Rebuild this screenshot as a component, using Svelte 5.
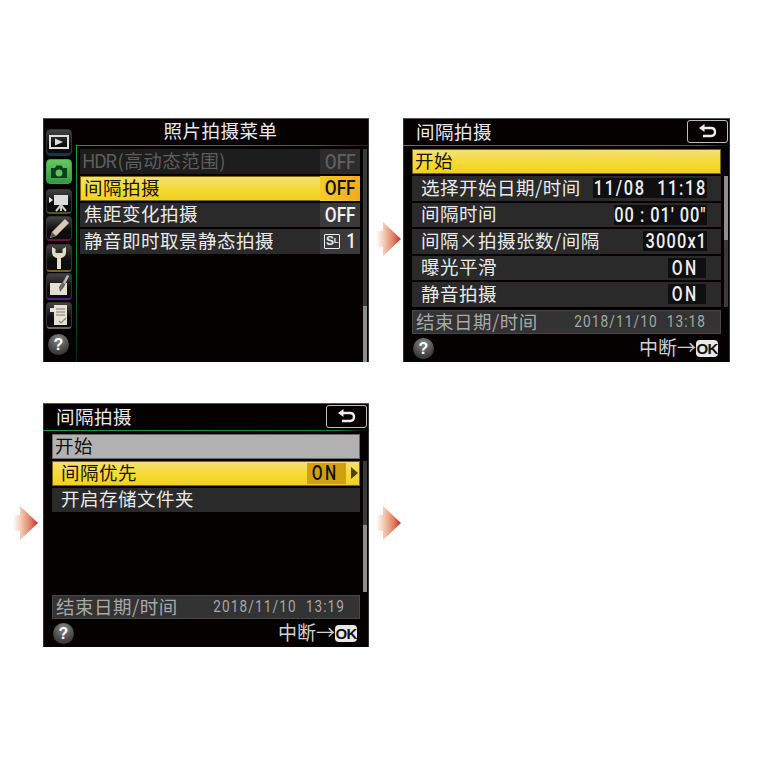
<script>
  const menuRows = [
    { prefix: 'HDR', label: '(高动态范围)', kind: 'off', value: 'OFF', state: 'disabled' },
    { label: '间隔拍摄', kind: 'off', value: 'OFF', state: 'active' },
    { label: '焦距变化拍摄', kind: 'off', value: 'OFF', state: '' },
    { label: '静音即时取景静态拍摄', kind: 'sl', value: '1', state: '' }
  ];
  const shootRows = [
    { label: '选择开始日期/时间', value: '11/08  11:18', cls: 'd1' },
    { label: '间隔时间', value: '00 : 01′ 00″', cls: 'd2' },
    { label: '间隔×拍摄张数/间隔', value: '3000x1', cls: 'd3' },
    { label: '曝光平滑', value: 'ON', cls: 'on' },
    { label: '静音拍摄', value: 'ON', cls: 'on' }
  ];
</script>

{#snippet arrow(cls)}
  <svg class="arrow {cls}" viewBox="0 0 26 34" width="26" height="34" aria-hidden="true">
    <defs>
      <linearGradient id="ag-{cls}" x1="0" x2="1" y1="0" y2="0">
        <stop offset="0" stop-color="#fff" />
        <stop offset=".3" stop-color="#f3cdb8" />
        <stop offset=".7" stop-color="#e07f62" />
        <stop offset="1" stop-color="#c9262a" />
      </linearGradient>
    </defs>
    <path d="M0 9 H7 V0 L25 17 L7 34 V25 H0Z" fill="url(#ag-{cls})" />
  </svg>
{/snippet}

{#snippet help()}
  <span class="help">?</span>
{/snippet}

{#snippet back()}
  <span class="back">
    <svg viewBox="0 0 22 16" width="22" height="16" aria-hidden="true">
      <path d="M5 4 H14 Q18 4 18 8 Q18 12 14 12 H6" fill="none" stroke="#eee" stroke-width="2.4" />
      <path d="M7.5 0 V8 L2 4Z" fill="#eee" />
    </svg>
  </span>
{/snippet}

{#snippet footer(date)}
  <div class="end"><span class="end-label">结束日期/时间</span><span class="end-date">{date}</span></div>
  <div class="foot">
    {@render help()}
    <span class="cancel"><span class="cancel-text">中断→</span><b class="ok">OK</b></span>
  </div>
{/snippet}

<div class="page">
  <section class="screen menu">
    <nav class="rail">
      <span class="tile t-play">
        <svg viewBox="0 0 26 27" width="26" height="27"><rect x="4" y="7" width="18" height="12" fill="none" stroke="#ddd" stroke-width="2"/><path d="M9 9.5 L17 13 L9 16.5Z" fill="#ddd"/></svg>
      </span>
      <span class="tile t-cam">
        <svg viewBox="0 0 26 25" width="26" height="25"><path d="M5 9 H9 L10.5 6.5 H15.5 L17 9 H21 V19 H5Z" fill="#0d3f1e"/><circle cx="13" cy="14" r="3.4" fill="#5fc25e"/></svg>
      </span>
      <span class="tile t-movie">
        <svg viewBox="0 0 26 25" width="26" height="25"><path d="M3 8 L7 11 L3 14Z" fill="#eee"/><rect x="8" y="6" width="14" height="10" fill="#ddd"/><path d="M15 16 L10 22 M15 16 V22 M15 16 L20 22" stroke="#ccc" stroke-width="2"/></svg>
      </span>
      <span class="tile t-pen">
        <svg viewBox="0 0 26 25" width="26" height="25"><path d="M19 3 L23 7 L10 20 L4 22 L6 16Z" fill="#d9c9b6"/><path d="M4 22 L6 16 L10 20Z" fill="#555"/></svg>
      </span>
      <span class="tile t-wrench">
        <svg viewBox="0 0 26 27" width="26" height="27"><path d="M6 3 V8 Q6 13 11 14 V25 H15 V14 Q20 13 20 8 V3 L16.5 5 V9 H9.5 V5Z" fill="#e5dcc4"/></svg>
      </span>
      <span class="tile t-retouch">
        <svg viewBox="0 0 26 27" width="26" height="27"><rect x="4" y="10" width="17" height="12" fill="#e4dfcf"/><path d="M21 2 L23 3 L18 14 L14 19 L13 14Z" fill="#666"/><path d="M21 2 L23 3 L19 11 L17 10Z" fill="#bbb"/></svg>
      </span>
      <span class="tile t-my">
        <svg viewBox="0 0 26 27" width="26" height="27"><path d="M8 3 H21 V23 H8Z M4 6 H8 V10 H4Z" fill="#e5e1d2"/><path d="M10 7 H19 M10 10 H19 M10 13 H19" stroke="#777" stroke-width="1"/><path d="M13 19 L15 21 L20 16" stroke="#888" stroke-width="1.2" fill="none"/></svg>
      </span>
      <span class="rail-help">{@render help()}</span>
    </nav>
    <div class="main">
      <h2 class="menu-title">照片拍摄菜单</h2>
      <div class="menu-body">
        <div class="rows">
          {#each menuRows as r}
            <div class="row {r.state}">
              <span class="label">{#if r.prefix}<span class="hdr">{r.prefix}</span>{/if}{r.label}</span>
              <span class="val">
                {#if r.kind === 'sl'}<span class="sl">S<small>L</small></span>{/if}<span class="valtext">{r.value}</span>
              </span>
            </div>
          {/each}
        </div>
        <div class="bar"><i class="thumb-low"></i></div>
      </div>
    </div>
    {@render arrow('a1')}
  </section>

  <section class="screen sub">
    <header class="head"><h2>间隔拍摄</h2>{@render back()}</header>
    <div class="start yellow"><span>开始</span></div>
    <div class="sub-body">
      <div class="rows">
        {#each shootRows as r}
          <div class="row"><span class="label">{r.label}</span><span class="box {r.cls}"><span class="boxtext">{r.value}</span></span></div>
        {/each}
      </div>
      <div class="bar short"><i class="thumb-high"></i></div>
    </div>
    {@render footer('2018/11/10  13:18')}
  </section>

  <section class="screen sub">
    <header class="head"><h2>间隔拍摄</h2>{@render back()}</header>
    <div class="start grey"><span>开始</span></div>
    <div class="sub-body">
      <div class="rows">
        <div class="row active slim">
          <span class="label">间隔优先</span>
          <span class="box on dim"><span class="boxtext">ON</span></span>
          <i class="tri"></i>
        </div>
        <div class="row"><span class="label">开启存储文件夹</span></div>
      </div>
      <div class="bar short"><i class="thumb-mid"></i></div>
    </div>
    {@render footer('2018/11/10  13:19')}
    {@render arrow('a2')}
    {@render arrow('a3')}
  </section>
</div>

<style>
  :global(body) { margin: 0; background: #fff; }
  .page {
    width: 760px;
    height: 760px;
    box-sizing: border-box;
    padding: 118px 0 0 43px;
    display: grid;
    grid-template-columns: 326px 327px;
    grid-auto-rows: 244px;
    column-gap: 34px;
    row-gap: 41px;
    font-family: "Noto Sans CJK SC", "Noto Sans", sans-serif;
  }
  .screen {
    position: relative;
    background: #050101;
    color: #e9e9e9;
    box-sizing: border-box;
    box-shadow: inset 0 1px 0 #555, inset 1px 0 0 #333, inset -1px 0 0 #333;
    font-size: 18.5px;
    letter-spacing: .5px;
    line-height: 24px;
  }
  h2 { margin: 0; font-weight: 400; font-size: 18.5px; }

  .arrow { position: absolute; }
  .a1 { left: 333px; top: 104px; }
  .a2 { left: -30px; top: 103px; }
  .a3 { left: 333px; top: 103px; }

  .menu { display: flex; }
  .rail {
    width: 33px;
    box-sizing: border-box;
    padding: 11px 0 0 3px;
    display: flex;
    flex-direction: column;
    gap: 2px;
  }
  .tile {
    display: block;
    box-sizing: border-box;
    width: 26px;
    height: 27px;
    border-radius: 4px;
    background: linear-gradient(#444, #0c0c0c 60%);
    border: 1px solid #333;
    overflow: hidden;
  }
  .tile svg { display: block; margin: -1px; }
  .t-play { box-shadow: inset 0 -2px 0 #0c3a55; }
  .t-cam { height: 25px; background: linear-gradient(#64c860, #2f9c3c); border-color: #3aa548; margin-top: 1px; }
  .t-movie { height: 25px; margin-top: 3px; border-bottom: 2px solid #4e5a1c; }
  .t-pen { height: 25px; border-bottom: 2px solid #6d1046; }
  .t-wrench { height: 28px; margin-top: 1px; border-color: #3a3428 #3a3428 #7c5c24; border-bottom-width: 2px; }
  .t-retouch { margin-top: -1px; border-bottom: 2px solid #58207e; }
  .t-my { border-bottom: 2px solid #666; }
  .rail-help { margin: 3px 0 0 2px; }

  .help {
    display: block;
    width: 21px;
    height: 21px;
    border-radius: 50%;
    background: radial-gradient(circle at 50% 25%, #888, #3e3e3e 70%);
    color: #fff;
    font: 700 16px/21px "Liberation Sans", sans-serif;
    text-align: center;
    letter-spacing: 0;
  }

  .main { flex: 1; display: flex; flex-direction: column; min-width: 0; }
  .menu-title { height: 27px; line-height: 25px; text-align: center; padding-right: 4px; }
  .menu-body {
    flex: 1;
    display: flex;
    background:
      linear-gradient(90deg, #1e9a44, #14803a 80%, #08301a) top left / 100% 1px no-repeat,
      linear-gradient(#1e9a44, #14803a 55%, #08240f) top left / 1px 100% no-repeat;
    padding: 4px 2px 0 4px;
    min-height: 0;
  }

  .rows { flex: 1; display: flex; flex-direction: column; gap: 2px; min-width: 0; }
  .row {
    display: flex;
    align-items: center;
    height: 24.5px;
    background: #2a2a2a;
    padding-left: 9px;
    flex: none;
  }
  .label { flex: 1; white-space: nowrap; margin-top: -3px; }
  .hdr { letter-spacing: -1.5px; margin-right: 2px; }

  .menu-body .row { padding-left: 4px; padding-right: 0; }
  .menu-body .row.disabled { padding-left: 2px; }
  .menu-body .val {
    width: 36px;
    height: 100%;
    display: flex;
    align-items: center;
    justify-content: flex-end;
    padding-right: 4px;
    background: #3a3a3a;
  }
  .valtext {
    font: 500 21px/24px Roboto, sans-serif;
    letter-spacing: 0;
    display: inline-block;
    transform: scaleX(.82);
    transform-origin: right center;
    color: #f2f2f2;
  }
  .sl {
    font: 700 12px/14px "Liberation Sans", sans-serif;
    letter-spacing: -.5px;
    border: 1px solid #eee;
    margin-right: 4px;
    height: 15px;
    width: 16px;
    flex: none;
    box-sizing: border-box;
    display: inline-flex;
    align-items: center;
    justify-content: center;
    border-radius: 1px;
  }
  .sl small { font-size: 8px; }
  .row.disabled { background: #1d1d1d; color: #5d5d5d; height: 25px; }
  .row.disabled .val { background: #2c2c2c; }
  .row.disabled .valtext { color: #5e5e5e; }
  .row.active, .yellow {
    color: #1a1400;
    background: linear-gradient(#f3e07a, #f6d92f 60%, #f2cf20);
    box-shadow: inset 0 0 0 1px #7b6506;
  }
  .row.active .val { background: linear-gradient(90deg, #f5cb2c, #f0ac1e); }
  .row.active .valtext { color: #111; }

  .bar {
    width: 4px;
    flex: none;
    margin-left: 3px;
    background: #3a3a3a;
    position: relative;
    margin-bottom: 0;
  }
  .bar i { position: absolute; left: 0; right: 0; background: #8e8e8e; }
  .thumb-low { bottom: 0; height: 56px; }
  .thumb-high { top: 0; height: 64px; }
  .thumb-mid { top: 64px; height: 67px; }
  .bar.short { margin-right: 2px; }

  .head {
    height: 27px;
    display: flex;
    align-items: center;
    justify-content: space-between;
    padding: 0 2px 0 13px;
    border-bottom: 1px solid #14803a;
    border-image: linear-gradient(90deg, #1e9a44, #14803a 90%, #050101) 1;
  }
  .head h2 { line-height: 25px; }
  .back {
    box-sizing: border-box;
    width: 41px;
    height: 23px;
    border: 1px solid #bdbdbd;
    border-radius: 3px;
    display: flex;
    align-items: center;
    justify-content: center;
  }
  .start {
    margin: 3px 9px 0 9px;
    height: 25px;
    padding-left: 3px;
    display: flex;
    align-items: center;
    box-sizing: border-box;
  }
  .start span { margin-top: -3px; }
  .grey { background: #b1b1b1; color: #111; box-shadow: inset 0 0 0 1px #6c6c6c; }

  .sub-body { display: flex; height: 131px; margin: 2px 0 0 9px; }
  .sub-body .row { padding-right: 15px; }
  .box {
    background: #0f0f0f;
    height: 20px;
    display: flex;
    justify-content: flex-end;
    flex: none;
    color: #eee;
  }
  .boxtext {
    flex: none;
    display: block;
    font: 500 20px/20px Roboto, sans-serif;
    white-space: pre;
    transform: scaleX(.82);
    transform-origin: right center;
  }
  .d1 { width: 114px; margin-right: -1px; }
  .d1 .boxtext { letter-spacing: 2px; }
  .d2 { width: 93px; margin-right: -1px; }
  .d2 .boxtext { letter-spacing: 1.2px; }
  .d3 { width: 64px; margin-right: -1px; }
  .d3 .boxtext { letter-spacing: 1.4px; }
  .on { width: 38px; padding-right: 8px; box-sizing: border-box; }
  .on .boxtext { font-size: 21px; letter-spacing: 3px; transform: scaleX(.75); }
  .row.slim { padding-right: 2px; }
  .dim { background: #cfa10f; width: 39px; margin-right: 5px; height: 21px; }
  .dim .boxtext { color: #111; }
  .tri {
    width: 0;
    height: 0;
    border-left: 7px solid #4d4300;
    border-top: 6px solid transparent;
    border-bottom: 6px solid transparent;
    flex: none;
  }

  .end {
    margin: 3px 9px 0 9px;
    height: 24px;
    background: #333;
    border: 1px solid #474747;
    box-sizing: border-box;
    display: flex;
    align-items: center;
    justify-content: space-between;
    padding: 0 14px 0 3px;
    color: #a8a8a8;
    white-space: nowrap;
  }
  .end-label { margin-top: -2px; }
  .end-date {
    font: 400 16px/20px Roboto, sans-serif;
    letter-spacing: 1.3px;
    white-space: pre;
    display: block;
    flex: none;
    transform: scaleX(.85);
    transform-origin: right center;
  }
  .foot {
    height: 28px;
    display: flex;
    align-items: center;
    justify-content: space-between;
    padding: 0 12px 0 10px;
  }
  .cancel { display: flex; align-items: center; color: #d0d0d0; font-size: 19px; letter-spacing: 0; }
  .cancel-text { margin-top: -2px; }
  .ok {
    background: #e8e8e8;
    color: #111;
    border-radius: 4px;
    font: 700 15px/17px "Liberation Sans", sans-serif;
    width: 22px;
    height: 17px;
    text-align: center;
    letter-spacing: -.8px;
    overflow: hidden;
  }
</style>
